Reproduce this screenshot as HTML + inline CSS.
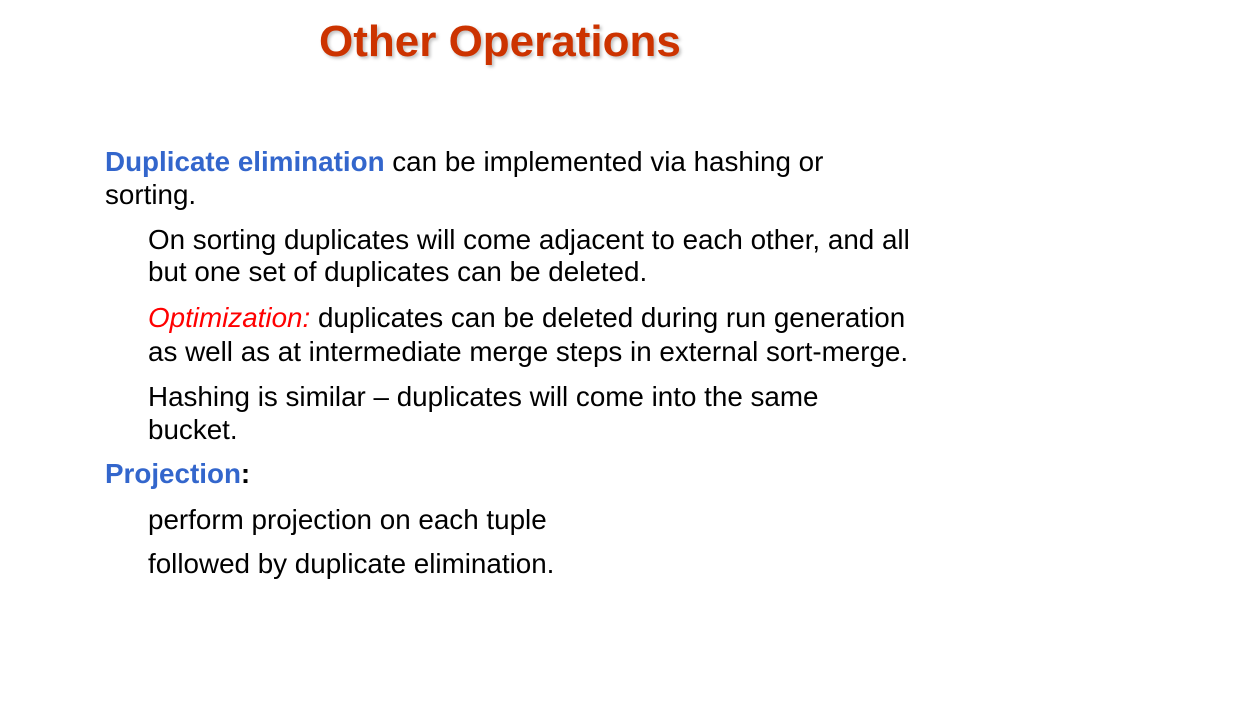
<!DOCTYPE html>
<html><head><meta charset="utf-8"><style>
body{margin:0;width:1254px;height:706px;background:#fff;position:relative;overflow:hidden;font-family:"Liberation Sans",Arial,Helvetica,sans-serif;}
.t{position:absolute;left:319px;top:17px;font-size:44px;font-weight:bold;color:#cc3300;text-shadow:2px 2px 3px rgba(0,0,0,0.25);white-space:nowrap;}
.l{position:absolute;font-size:27.8px;color:#000;white-space:nowrap;line-height:30px;}
.b{color:#3366cc;font-weight:bold}
.r{color:#ff0000;font-style:italic}
</style></head><body>
<div class="t">Other Operations</div>
<div class="l" style="left:105px;top:147px"><span class="b">Duplicate elimination</span> can be implemented via hashing or</div>
<div class="l" style="left:105px;top:180px">sorting.</div>
<div class="l" style="left:148px;top:225px">On sorting duplicates will come adjacent to each other, and all</div>
<div class="l" style="left:148px;top:257px">but one set of duplicates can be deleted.</div>
<div class="l" style="left:148px;top:303px"><span class="r">Optimization:</span> duplicates can be deleted during run generation</div>
<div class="l" style="left:148px;top:337px">as well as at intermediate merge steps in external sort-merge.</div>
<div class="l" style="left:148px;top:382px">Hashing is similar – duplicates will come into the same</div>
<div class="l" style="left:148px;top:415px">bucket.</div>
<div class="l" style="left:105px;top:459px"><span class="b">Projection</span><b>:</b></div>
<div class="l" style="left:148px;top:505px">perform projection on each tuple</div>
<div class="l" style="left:148px;top:549px">followed by duplicate elimination.</div>
</body></html>
